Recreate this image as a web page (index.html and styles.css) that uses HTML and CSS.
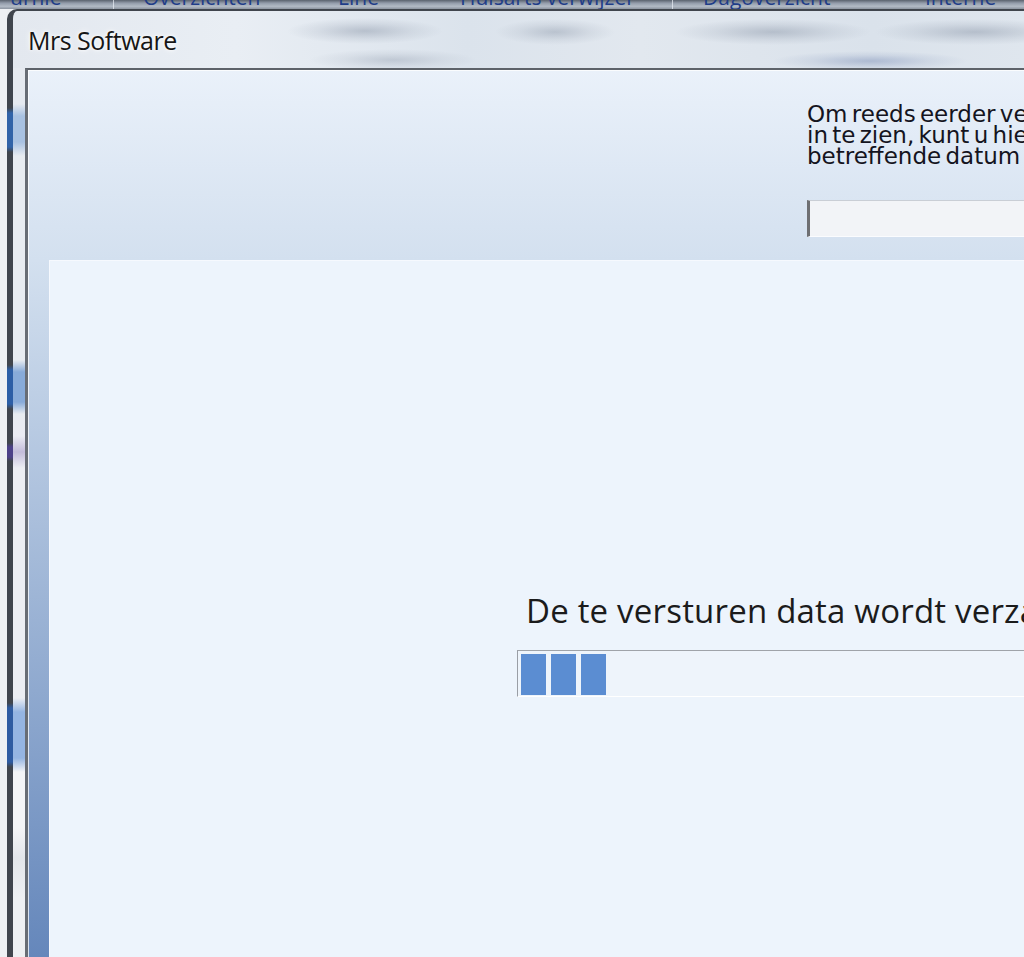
FILE: index.html
```html
<!DOCTYPE html>
<html lang="nl">
<head>
<meta charset="utf-8">
<title>Mrs Software</title>
<link rel="stylesheet" href="styles.css">
</head>
<body>
<div class="desktop">
  <div class="appbar">
    <span class="ab">urnie</span>
    <span class="ab-sep"></span>
    <span class="ab">Overzichten</span>
    <span class="ab">Line</span>
    <span class="ab">Huisarts verwijzer</span>
    <span class="ab-sep"></span>
    <span class="ab">Dagoverzicht</span>
    <span class="ab">Interne</span>
  </div>
  <div class="main">
    <div class="appside"></div>
    <div class="window">
      <div class="titlebar">
        <div class="title">Mrs Software</div>
      </div>
      <div class="wbody">
        <div class="frame-left"></div>
        <div class="client">
          <div class="client-top">
            <div class="hint">
              <div class="hint-line">Om reeds eerder verstuurde gegevens</div>
              <div class="hint-line">in te zien, kunt u hier de</div>
              <div class="hint-line">betreffende datum selecteren</div>
            </div>
            <div class="date-input"></div>
          </div>
          <div class="panel">
            <div class="status">De te versturen data wordt verzameld...</div>
            <div class="progress">
              <div class="seg"></div>
              <div class="seg"></div>
              <div class="seg"></div>
            </div>
          </div>
        </div>
      </div>
    </div>
  </div>
</div>
</body>
</html>
```
FILE: styles.css
```css
html, body {
  margin: 0;
  padding: 0;
  background: #eef0f3;
}

.desktop {
  width: 1024px;
  height: 957px;
  overflow: hidden;
  display: flex;
  flex-direction: column;
  background: #eceef1;
}

/* background application menu strip (only the lower half of its labels shows) */
.appbar {
  height: 9px;
  flex: none;
  display: grid;
  grid-template-columns: 103px 30px 195px 122px 212px 31px 222px auto;
  align-items: start;
  padding-left: 10px;
  overflow: hidden;
  white-space: nowrap;
  background: linear-gradient(#5a626e, #949dab 35%, #b2bac5 70%, #8c94a0);
  font-family: "Open Sans", "Noto Sans", sans-serif;
  font-size: 21px;
  line-height: 21px;
  color: #1f3d88;
}

.ab {
  margin-top: -13px;
}

.ab-sep {
  width: 1px;
  height: 9px;
  background: rgba(235, 240, 246, 0.7);
}

.main {
  flex: 1;
  display: flex;
  min-height: 0;
}

.appside {
  width: 7px;
  flex: none;
  background: #eef0f3;
}

/* window frame: left/top border band drawn by the border-box background */
.window {
  flex: 1;
  min-width: 0;
  display: flex;
  flex-direction: column;
  border-style: solid;
  border-color: transparent;
  border-width: 2px 0 0 6px;
  border-top-left-radius: 10px;
  overflow: hidden;
  background: linear-gradient(to bottom,
    #40454d 0, #40454d 99px,
    #3163a8 104px, #3163a8 138px,
    #40454d 143px, #40454d 356px,
    #2c5ea6 361px, #2c5ea6 395px,
    #40454d 400px, #40454d 434px,
    #4c4088 438px, #4c4088 448px,
    #40454d 452px, #40454d 694px,
    #2e5ba1 699px, #2e5ba1 753px,
    #40454d 758px);
  background-origin: border-box;
}

.titlebar {
  height: 57px;
  flex: none;
  box-sizing: border-box;
  padding: 14px 0 0 15px;
  background:
    radial-gradient(78px 13px at 352px 20px, rgba(125, 137, 156, 0.42), rgba(125, 137, 156, 0.14) 60%, rgba(125, 137, 156, 0)),
    radial-gradient(84px 11px at 380px 49px, rgba(125, 137, 156, 0.32), rgba(125, 137, 156, 0.1) 60%, rgba(125, 137, 156, 0)),
    radial-gradient(60px 13px at 542px 21px, rgba(125, 137, 156, 0.38), rgba(125, 137, 156, 0.12) 60%, rgba(125, 137, 156, 0)),
    radial-gradient(98px 13px at 760px 21px, rgba(125, 137, 156, 0.42), rgba(125, 137, 156, 0.14) 60%, rgba(125, 137, 156, 0)),
    radial-gradient(100px 13px at 962px 21px, rgba(125, 137, 156, 0.42), rgba(125, 137, 156, 0.14) 60%, rgba(125, 137, 156, 0)),
    radial-gradient(98px 10px at 857px 50px, rgba(105, 126, 172, 0.4), rgba(105, 126, 172, 0.12) 60%, rgba(105, 126, 172, 0)),
    linear-gradient(90deg, #e3e8ef 0, #e9eef4 22%, #dbe3ec 45%, #e2e8ef 62%, #dae2eb 85%, #dfe6ee 100%);
}

.title {
  font-family: "Open Sans", "Noto Sans", sans-serif;
  font-size: 25px;
  line-height: 30px;
  letter-spacing: -0.5px;
  color: #161616;
  white-space: nowrap;
  text-shadow: 0 0 6px #ffffff, 0 0 3px #ffffff;
}

.wbody {
  flex: 1;
  min-height: 0;
  display: flex;
}

.frame-left {
  width: 12px;
  flex: none;
  background: linear-gradient(to bottom,
    #e6eaf0 0, #e6eaf0 36px,
    #a9c2e2 48px, #a9c2e2 74px,
    #e8ecf1 88px, #e8ecf1 292px,
    #88abd9 304px, #88abd9 334px,
    #e8ecf1 346px, #ebecf3 368px,
    #c3bcda 384px,
    #eceef3 400px, #eceef3 630px,
    #95b5e2 644px, #95b5e2 690px,
    #f4f5f7 704px, #f4f5f7 760px,
    #e3e6ea 790px, #eef0f3 830px);
}

.client {
  flex: 1;
  min-width: 0;
  display: flex;
  flex-direction: column;
  border-left: 3px solid #686d75;
  border-top: 2px solid #5d6269;
  box-shadow: inset 1px 1px 0 rgba(255, 255, 255, 0.75);
  background: linear-gradient(to bottom, #eaf1fa 0, #d3e0ef 190px, #6587bb 100%);
}

.client-top {
  height: 190px;
  flex: none;
  box-sizing: border-box;
  padding: 34px 0 0 779px;
}

.hint {
  font-family: "DejaVu Sans", "Noto Sans", sans-serif;
  font-size: 23px;
  line-height: 21px;
  word-spacing: -3px;
  color: #141420;
  white-space: nowrap;
}

.date-input {
  margin-top: 33px;
  width: 320px;
  height: 37px;
  box-sizing: border-box;
  border-left: 3px solid #6e6f72;
  border-top: 1px solid #c9ced5;
  border-bottom: 1px solid #fbfcfe;
  background: #f2f4f7;
}

.panel {
  flex: 1;
  margin-left: 21px;
  box-sizing: border-box;
  padding: 331px 0 0 468px;
  background: #edf4fc;
  box-shadow: inset 1px 1px 0 #f6f9fe;
}

.status {
  margin-left: 9px;
  font-family: "Open Sans", "Noto Sans", sans-serif;
  font-size: 33px;
  line-height: 40px;
  letter-spacing: 0.2px;
  color: #1b1b1b;
  white-space: nowrap;
}

.progress {
  margin-top: 19px;
  width: 600px;
  height: 47px;
  box-sizing: border-box;
  display: flex;
  gap: 5px;
  padding: 3px 0 0 3px;
  border-top: 1px solid #9fa3a9;
  border-left: 1px solid #9a9ea5;
  border-bottom: 1px solid #ffffff;
  background: #eef4fb;
}

.seg {
  width: 25px;
  height: 41px;
  flex: none;
  background: #5b8dd2;
}
```
